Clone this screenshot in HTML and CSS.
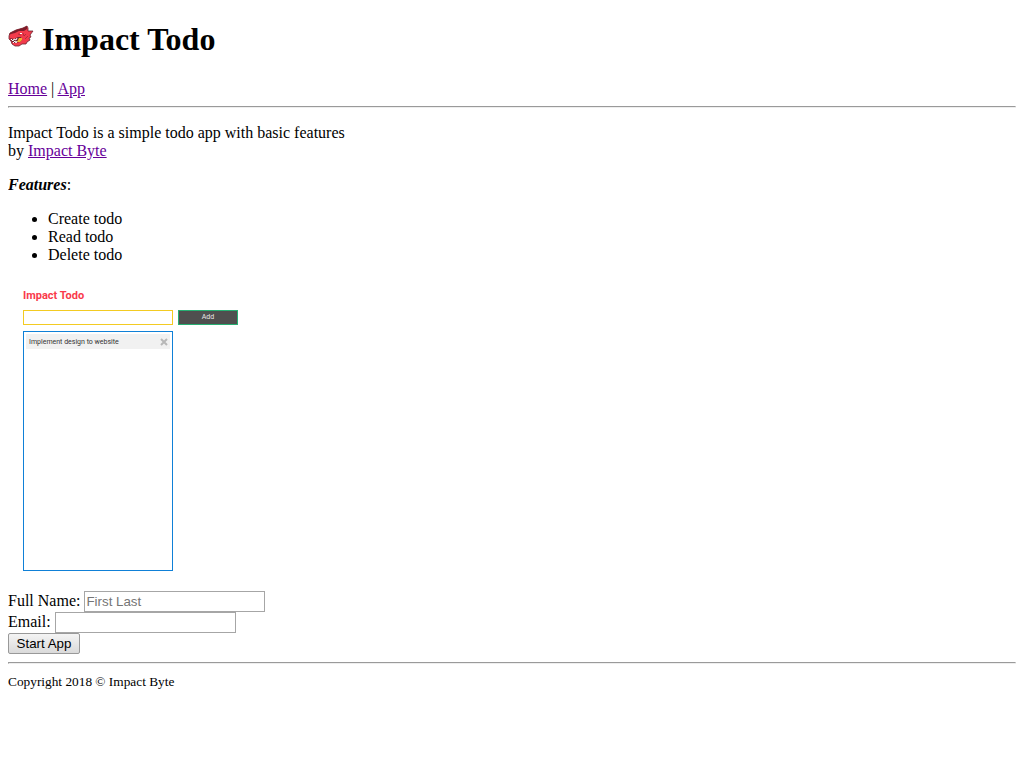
FILE: index.html
```html
<!DOCTYPE html>
<html lang="en">
<head>
<meta charset="utf-8">
<title>Impact Todo</title>
<link rel="stylesheet" href="styles.css">
</head>
<body>
<header>
  <h1 class="title"><svg class="logo" viewBox="0 -2 26 26" aria-hidden="true">
    <path d="M1 10 2 7 8 4 15 2 19 0 20 2 20 5 25 5 22 9 23 11 21 12 22 14 19 16 18 18 14 18 11 20 7 20 4 18 3 15 1 13Z" fill="#f23a4b" stroke="#6b2630" stroke-width=".8" stroke-linejoin="round"/>
    <path d="M1 9 2 7 8 4 15 2 19 0 19 3 16 5 11 5 7 7 3 8Z" fill="#7c1c29"/>
    <path d="M2 12 6 13 10 11 13 11 14 14 12 16 7 17 4 16Z" fill="#6b2630"/>
    <path d="M11 12 14 12 14 14 12 16 9 16Z" fill="#f3b02c"/>
    <path d="M3 13 5 15 6 13 8 14 9 12M5 17 7 15 8 17 9 15" fill="none" stroke="#fff" stroke-width="1"/>
    <path d="M10 8 13 9M15 7 16 10 18 8M17 13 20 10" fill="none" stroke="#8a2531" stroke-width=".6"/>
    <path d="M12 7h2v1h-2z" fill="#fff"/>
  </svg> Impact Todo</h1>
  <nav><a href="#home">Home</a> | <a href="#app">App</a></nav>
</header>
<hr>
<main>
  <p>Impact Todo is a simple todo app with basic features<br>by <a href="#byte">Impact Byte</a></p>
  <p><strong><em>Features</em></strong>:</p>
  <ul>
    <li>Create todo</li>
    <li>Read todo</li>
    <li>Delete todo</li>
  </ul>
  <section class="preview" aria-label="App preview">
    <h2 class="preview-title">Impact Todo</h2>
    <div class="preview-bar">
      <input class="preview-input" type="text" aria-label="New todo">
      <button class="preview-add" type="button">Add</button>
    </div>
    <div class="preview-list">
      <div class="preview-item">
        <span>Implement design to website</span>
        <button class="preview-delete" type="button" aria-label="Delete"><svg class="cross" viewBox="0 0 8 8"><path d="M1 1 7 7M7 1 1 7" stroke="#b8b8b8" stroke-width="2"/></svg></button>
      </div>
    </div>
  </section>
  <form>
    <div><label for="name">Full Name:</label> <input class="field" id="name" type="text" placeholder="First Last"></div>
    <div><label for="email">Email:</label> <input class="field" id="email" type="email"></div>
    <button class="start" type="button">Start App</button>
  </form>
</main>
<hr>
<footer><small>Copyright 2018 © Impact Byte</small></footer>
</body>
</html>
```
FILE: styles.css
```css
body {
  margin: 8px;
  background: #fff;
  color: #000;
  font-family: "Liberation Serif", "Times New Roman", serif;
  font-size: 16px;
  line-height: 18px;
}

a {
  color: #609;
}

.title {
  margin: 0 0 22px;
  padding-top: 13px;
  font-size: 32px;
  line-height: 37px;
}

.logo {
  width: 26px;
  height: 26px;
}

.preview {
  display: flex;
  flex-direction: column;
  gap: 6px;
  margin-bottom: 20px;
  padding: 8px 15px 0;
  font-family: Roboto, sans-serif;
}

.preview-title {
  margin: 0;
  color: #f93a4b;
  font-size: 11px;
  line-height: 16px;
}

.preview-bar {
  display: flex;
  gap: 5px;
}

.preview-input {
  box-sizing: border-box;
  width: 150px;
  height: 15px;
  padding: 0 4px;
  border: 1px solid #f3cb22;
  font-size: 7px;
}

.preview-add {
  width: 60px;
  height: 15px;
  padding: 0;
  border: 1px solid #27ae72;
  background: #4f4f4f;
  color: #e8e8e8;
  font: 7px/13px Roboto, sans-serif;
}

.preview-list {
  box-sizing: border-box;
  width: 150px;
  height: 240px;
  padding: 2px;
  border: 1px solid #0f80d7;
}

.preview-item {
  display: flex;
  align-items: center;
  justify-content: space-between;
  height: 15px;
  padding: 0 2px 0 3px;
  background: #f1f1f1;
  color: #333;
  font-size: 7px;
}

.preview-delete {
  display: flex;
  padding: 0;
  border: 0;
  background: none;
}

.cross {
  width: 8px;
  height: 8px;
}

.field {
  box-sizing: border-box;
  width: 181px;
  height: 21px;
  padding: 1px;
  border: 1px solid #a6a6a6;
  font-family: "Liberation Sans", Arial, sans-serif;
  font-size: smaller;
}

.field::placeholder {
  color: #757575;
}

.start {
  display: block;
  min-width: 72px;
  height: 21px;
  padding: 0 7px;
  border: 1px solid #999;
  border-radius: 2px;
  background: linear-gradient(#f4f4f4, #dadada);
  color: #000;
  font-family: "Liberation Sans", Arial, sans-serif;
  font-size: smaller;
}

small {
  font-size: smaller;
}
```
